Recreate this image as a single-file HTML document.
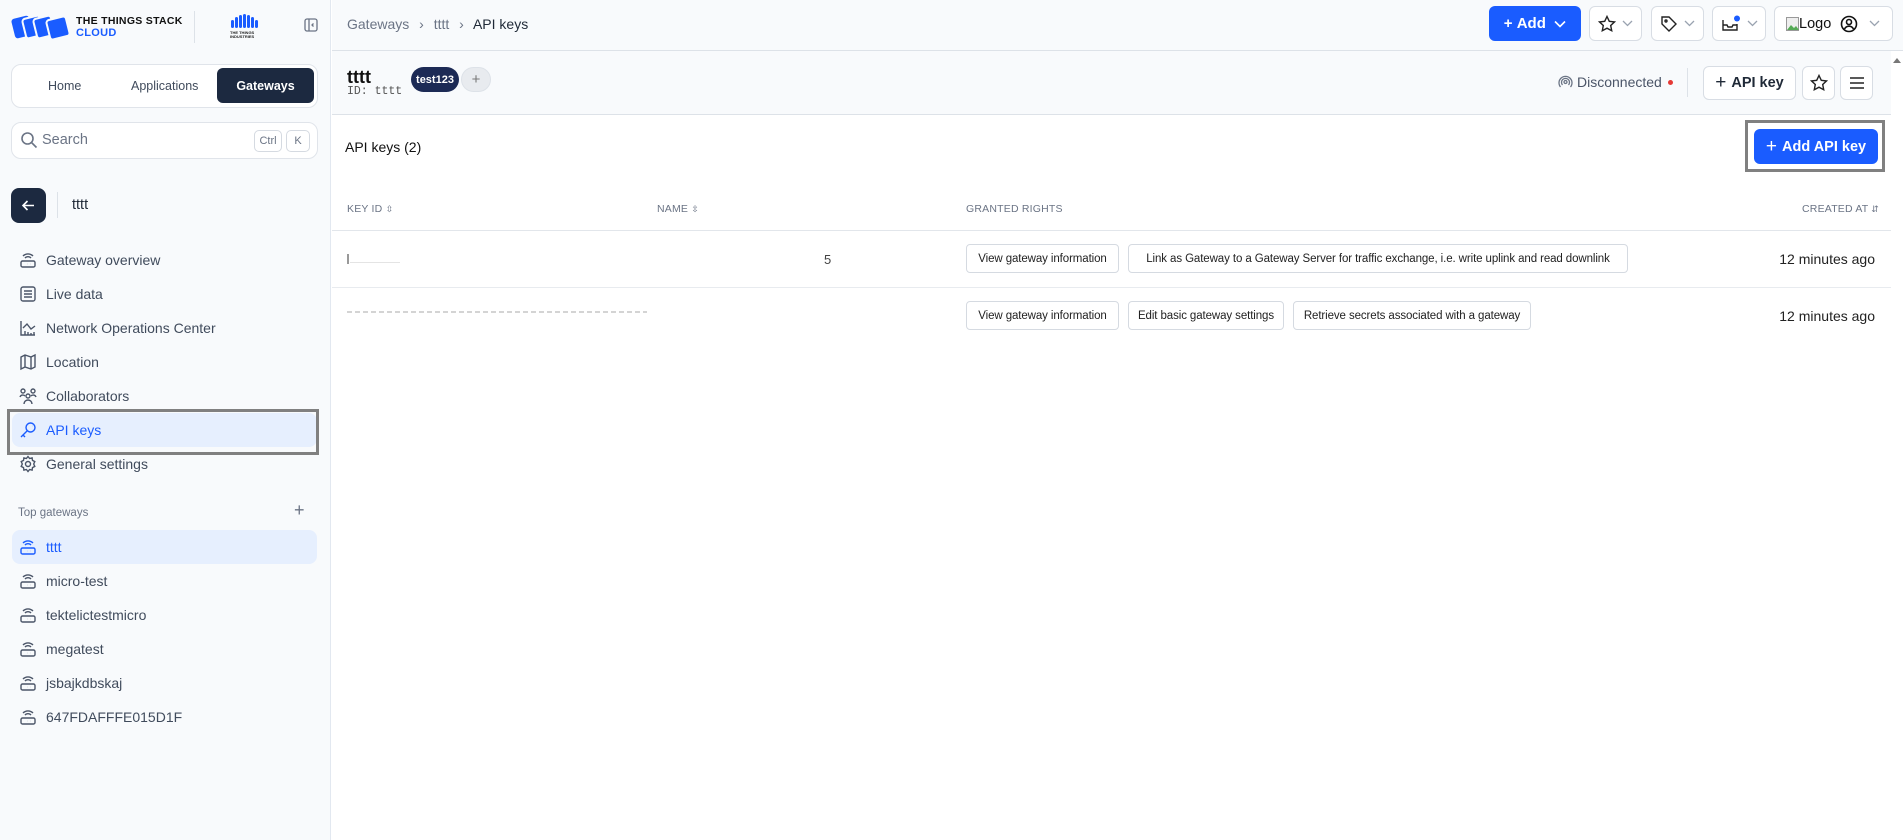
<!DOCTYPE html>
<html><head><meta charset="utf-8"><style>
*{box-sizing:border-box;margin:0;padding:0}
body{width:1903px;height:840px;overflow:hidden;background:#fff;font-family:"Liberation Sans",sans-serif;color:#1f2937;position:relative}
.a{position:absolute}
.side{left:0;top:0;width:331px;height:840px;background:#f8fafc;border-right:1px solid #e2e8f0}
.nav{left:19px;height:20px;display:flex;align-items:center;font-size:14px;color:#404b5c}
.nav svg{width:18px;height:18px;margin-right:9px;flex:none}
.chip{position:absolute;top:244px;height:29px;border:1px solid #d5dae1;border-radius:4px;background:#fff;font-size:11.5px;letter-spacing:-0.1px;color:#222;display:flex;align-items:center;justify-content:center;white-space:nowrap}
.btn{position:absolute;border:1px solid #d8dde4;border-radius:6px;background:#fff;display:flex;align-items:center;justify-content:center}
.th{position:absolute;top:203px;font-size:10.5px;color:#6b7485;letter-spacing:.2px}
</style></head><body>
<div class="a side"></div>
<!-- logo -->
<svg class="a" style="left:11px;top:13px" width="62" height="28" viewBox="0 0 62 28"><g fill="#1a5cff"><rect x="2" y="4" width="18" height="20" rx="3" transform="rotate(-14 11 14)"/><rect x="13" y="4" width="18" height="20" rx="3" transform="rotate(-14 22 14)" stroke="#f8fafc" stroke-width="2"/><rect x="24" y="4" width="18" height="20" rx="3" transform="rotate(-14 33 14)" stroke="#f8fafc" stroke-width="2"/><rect x="37" y="5" width="20" height="20" rx="3" transform="rotate(-14 47 15)" stroke="#f8fafc" stroke-width="2"/></g></svg>
<div class="a" style="left:76px;top:15px;font-size:10.5px;font-weight:bold;line-height:12px;color:#111;letter-spacing:.3px">THE THINGS STACK<br><span style="color:#1a5cff;font-size:11px">CLOUD</span></div>
<div class="a" style="left:194px;top:11px;width:1px;height:32px;background:#dde2e8"></div>
<svg class="a" style="left:230px;top:14px" width="28" height="14"><g fill="#1a5cff"><rect x="1" y="6" width="3" height="8" rx="1.5"/><rect x="5" y="3" width="3" height="11" rx="1.5"/><rect x="9" y="1" width="3" height="13" rx="1.5"/><rect x="13" y="0" width="3" height="14" rx="1.5"/><rect x="17" y="1" width="3" height="13" rx="1.5"/><rect x="21" y="3" width="3" height="11" rx="1.5"/><rect x="25" y="6" width="3" height="8" rx="1.5"/></g></svg>
<div class="a" style="left:230px;top:31px;font-size:4px;font-weight:bold;line-height:4px;color:#222">THE THINGS<br>INDUSTRIES</div>
<svg class="a" style="left:304px;top:18px" width="14" height="14" viewBox="0 0 14 14" fill="none" stroke="#6b7485" stroke-width="1.3"><rect x="1" y="1" width="12" height="12" rx="2"/><path d="M5 1v12M9.5 5.5L8 7l1.5 1.5"/></svg>
<!-- tabs -->
<div class="a" style="left:11px;top:64px;width:307px;height:44px;border:1px solid #e0e4ea;border-radius:10px;background:#fff"></div>
<div class="a" style="left:48px;top:79px;font-size:12.5px;color:#404b5c">Home</div>
<div class="a" style="left:131px;top:79px;font-size:12.5px;color:#404b5c">Applications</div>
<div class="a" style="left:217px;top:68px;width:97px;height:35px;border-radius:6px;background:#1c2940;color:#fff;font-size:12.5px;font-weight:bold;display:flex;align-items:center;justify-content:center">Gateways</div>
<!-- search -->
<div class="a" style="left:11px;top:122px;width:307px;height:37px;border:1px solid #e0e4ea;border-radius:10px;background:#fff"></div>
<svg class="a" style="left:20px;top:131px" width="18" height="18" viewBox="0 0 18 18" fill="none" stroke="#6b7485" stroke-width="1.6"><circle cx="7.5" cy="7.5" r="5.5"/><path d="M11.5 11.5l5 5"/></svg>
<div class="a" style="left:42px;top:132px;font-size:14.5px;color:#6b7485">Search</div>
<div class="a" style="left:254px;top:130px;width:28px;height:22px;border:1px solid #d5dae1;border-radius:5px;font-size:11px;color:#6b7485;display:flex;align-items:center;justify-content:center">Ctrl</div>
<div class="a" style="left:286px;top:130px;width:24px;height:22px;border:1px solid #d5dae1;border-radius:5px;font-size:11px;color:#6b7485;display:flex;align-items:center;justify-content:center">K</div>
<!-- back -->
<div class="a" style="left:11px;top:188px;width:35px;height:35px;border-radius:8px;background:#1c2940"></div>
<svg class="a" style="left:21px;top:198px" width="15" height="15" viewBox="0 0 15 15" fill="none" stroke="#fff" stroke-width="1.6"><path d="M13 7.5H2M6.5 3L2 7.5 6.5 12"/></svg>
<div class="a" style="left:57px;top:192px;width:1px;height:26px;background:#dde2e8"></div>
<div class="a" style="left:72px;top:197px;font-size:14.5px;color:#1f2937">tttt</div>
<!-- nav -->
<div class="a" style="left:12px;top:413px;width:305px;height:34px;background:#e6effe;border-radius:8px"></div>
<div class="a" style="left:7px;top:409px;width:312px;height:46px;border:3px solid #808080"></div>
<div class="a nav" style="top:250px"><svg viewBox="0 0 18 18" fill="none" stroke="#4b5568" stroke-width="1.4"><rect x="2" y="10" width="14" height="6" rx="1.5"/><path d="M6 7a4 4 0 016 0M4 5a7 7 0 0110 0M8 13h.1M11 13h.1"/></svg>Gateway overview</div>
<div class="a nav" style="top:284px"><svg viewBox="0 0 18 18" fill="none" stroke="#4b5568" stroke-width="1.4"><rect x="2" y="2" width="14" height="14" rx="2"/><path d="M5 6h8M5 9h8M5 12h8"/></svg>Live data</div>
<div class="a nav" style="top:318px"><svg viewBox="0 0 18 18" fill="none" stroke="#4b5568" stroke-width="1.4"><path d="M2 2v14h14M4 9l4-4 4 5 4-3M6 16v-4M9 16v-3M12 16v-2M15 16v-3"/></svg>Network Operations Center</div>
<div class="a nav" style="top:352px"><svg viewBox="0 0 18 18" fill="none" stroke="#4b5568" stroke-width="1.4"><path d="M2 4l4-2 6 2 4-2v12l-4 2-6-2-4 2zM6 2v12M12 4v12"/></svg>Location</div>
<div class="a nav" style="top:386px"><svg viewBox="0 0 18 18" fill="none" stroke="#4b5568" stroke-width="1.4"><circle cx="4" cy="4" r="2"/><circle cx="14" cy="4" r="2"/><circle cx="9" cy="9" r="2"/><path d="M1 10a3 3 0 015-1M17 10a3 3 0 00-5-1M5 17a4 4 0 018 0"/></svg>Collaborators</div>
<div class="a nav" style="top:420px;color:#1a5cff"><svg viewBox="0 0 18 18" fill="none" stroke="#1a5cff" stroke-width="1.4"><circle cx="11.5" cy="6.5" r="4.5"/><path d="M8.5 9.5L2 16M4 14l2 2M13 5h.1"/></svg>API keys</div>
<div class="a nav" style="top:454px"><svg viewBox="0 0 18 18" fill="none" stroke="#4b5568" stroke-width="1.4"><circle cx="9" cy="9" r="2.5"/><path d="M9 1.5l1.6 2 2.5-.6.4 2.5 2.3 1.2-1.1 2.4 1.1 2.4-2.3 1.2-.4 2.5-2.5-.6L9 16.5l-1.6-2-2.5.6-.4-2.5-2.3-1.2 1.1-2.4-1.1-2.4 2.3-1.2.4-2.5 2.5.6z"/></svg>General settings</div>
<div class="a" style="left:18px;top:507px;font-size:11.5px;color:#6b7485">Top gateways</div>
<div class="a" style="left:294px;top:500px;font-size:18px;color:#6b7485">+</div>
<div class="a" style="left:12px;top:530px;width:305px;height:34px;background:#e6effe;border-radius:8px"></div>
<div class="a nav" style="top:537px;color:#1a5cff"><svg viewBox="0 0 18 18" fill="none" stroke="#1a5cff" stroke-width="1.4"><rect x="2" y="10" width="14" height="6" rx="1.5"/><path d="M6 7a4 4 0 016 0M4 5a7 7 0 0110 0M8 13h.1M11 13h.1"/></svg>tttt</div>
<div class="a nav" style="top:571px"><svg viewBox="0 0 18 18" fill="none" stroke="#4b5568" stroke-width="1.4"><rect x="2" y="10" width="14" height="6" rx="1.5"/><path d="M6 7a4 4 0 016 0M4 5a7 7 0 0110 0M8 13h.1M11 13h.1"/></svg>micro-test</div>
<div class="a nav" style="top:605px"><svg viewBox="0 0 18 18" fill="none" stroke="#4b5568" stroke-width="1.4"><rect x="2" y="10" width="14" height="6" rx="1.5"/><path d="M6 7a4 4 0 016 0M4 5a7 7 0 0110 0M8 13h.1M11 13h.1"/></svg>tektelictestmicro</div>
<div class="a nav" style="top:639px"><svg viewBox="0 0 18 18" fill="none" stroke="#4b5568" stroke-width="1.4"><rect x="2" y="10" width="14" height="6" rx="1.5"/><path d="M6 7a4 4 0 016 0M4 5a7 7 0 0110 0M8 13h.1M11 13h.1"/></svg>megatest</div>
<div class="a nav" style="top:673px"><svg viewBox="0 0 18 18" fill="none" stroke="#4b5568" stroke-width="1.4"><rect x="2" y="10" width="14" height="6" rx="1.5"/><path d="M6 7a4 4 0 016 0M4 5a7 7 0 0110 0M8 13h.1M11 13h.1"/></svg>jsbajkdbskaj</div>
<div class="a nav" style="top:707px"><svg viewBox="0 0 18 18" fill="none" stroke="#4b5568" stroke-width="1.4"><rect x="2" y="10" width="14" height="6" rx="1.5"/><path d="M6 7a4 4 0 016 0M4 5a7 7 0 0110 0M8 13h.1M11 13h.1"/></svg>647FDAFFFE015D1F</div>

<!-- topbar -->
<div class="a" style="left:332px;top:0;width:1571px;height:114px;background:#f8fafc"></div>
<div class="a" style="left:332px;top:50px;width:1571px;height:1px;background:#dde2e8"></div>
<div class="a" style="left:332px;top:114px;width:1559px;height:1px;background:#dde2e8"></div>
<div class="a" style="left:347px;top:16px;font-size:14px;color:#6b7485">Gateways <span style="margin:0 6px">›</span> tttt <span style="margin:0 6px">›</span> <span style="color:#1f2937">API keys</span></div>
<div class="a" style="left:1489px;top:6px;width:92px;height:35px;border-radius:6px;background:#1a5cff;color:#fff;font-size:15px;font-weight:bold;display:flex;align-items:center;justify-content:center">+&nbsp;Add&nbsp;&nbsp;<svg width="12" height="8" viewBox="0 0 12 8" fill="none" stroke="#fff" stroke-width="1.6"><path d="M1 1.5l5 5 5-5"/></svg></div>
<div class="btn" style="left:1589px;top:6px;width:53px;height:35px"><svg width="18" height="18" viewBox="0 0 18 18" fill="none" stroke="#222" stroke-width="1.4"><path d="M9 1.5l2.3 4.8 5.2.6-3.8 3.6 1 5.2L9 13.2l-4.7 2.5 1-5.2L1.5 6.9l5.2-.6z"/></svg><svg style="margin-left:6px" width="11" height="7" fill="none" stroke="#9aa3b0" stroke-width="1.3"><path d="M1 1l4.5 4.5L10 1"/></svg></div>
<div class="btn" style="left:1651px;top:6px;width:53px;height:35px"><svg width="18" height="18" viewBox="0 0 18 18" fill="none" stroke="#222" stroke-width="1.4"><path d="M2 2h7l7 7-7 7-7-7z"/><circle cx="6" cy="6" r="1"/></svg><svg style="margin-left:6px" width="11" height="7" fill="none" stroke="#9aa3b0" stroke-width="1.3"><path d="M1 1l4.5 4.5L10 1"/></svg></div>
<div class="btn" style="left:1712px;top:6px;width:54px;height:35px"><svg width="20" height="18" viewBox="0 0 20 18" fill="none" stroke="#222" stroke-width="1.4"><path d="M2 5v10h14V9M2 10h4l1 2h4l1-2h4"/><circle cx="16" cy="3.5" r="3" fill="#1a5cff" stroke="none"/></svg><svg style="margin-left:6px" width="11" height="7" fill="none" stroke="#9aa3b0" stroke-width="1.3"><path d="M1 1l4.5 4.5L10 1"/></svg></div>
<div class="btn" style="left:1774px;top:6px;width:119px;height:35px;justify-content:flex-start;padding-left:11px"><svg width="13" height="14"><rect x="0.5" y="0.5" width="12" height="13" fill="#eee" stroke="#999"/><path d="M1 13l4-5 3 3 2-2 3 4z" fill="#5a5"/></svg><span style="font-size:14.5px;color:#111">Logo</span><svg style="margin-left:9px" width="18" height="18" viewBox="0 0 18 18" fill="none" stroke="#111" stroke-width="1.6"><circle cx="9" cy="9" r="7.5"/><circle cx="9" cy="7" r="2.5"/><path d="M4.5 14a5 5 0 019 0"/></svg><svg style="margin-left:11px" width="11" height="7" fill="none" stroke="#9aa3b0" stroke-width="1.3"><path d="M1 1l4.5 4.5L10 1"/></svg></div>
<!-- scrollbar -->
<div class="a" style="left:1891px;top:51px;width:12px;height:789px;background:#fff"></div>
<div class="a" style="left:1893px;top:58px;width:0;height:0;border-left:4px solid transparent;border-right:4px solid transparent;border-bottom:5px solid #777"></div>
<!-- gateway header -->
<div class="a" style="left:347px;top:67px;font-size:18px;font-weight:bold;color:#111">tttt</div>
<div class="a" style="left:347px;top:85px;font-size:11.5px;font-family:'Liberation Mono',monospace;color:#555">ID: tttt</div>
<div class="a" style="left:411px;top:67px;width:48px;height:25px;border-radius:13px;background:#1c2a55;color:#fff;font-size:11px;font-weight:bold;display:flex;align-items:center;justify-content:center">test123</div>
<div class="a" style="left:461px;top:67px;width:30px;height:25px;border-radius:13px;background:#e8ebef;border:1px solid #dde2e8;color:#777;font-size:15px;display:flex;align-items:center;justify-content:center">+</div>
<svg class="a" style="left:1558px;top:74px" width="15" height="15" viewBox="0 0 15 15" fill="none" stroke="#6b7485" stroke-width="1.3"><circle cx="7.5" cy="8" r="1.5"/><path d="M4.5 11a4 4 0 116 0M2.5 13a6.5 6.5 0 1110 0"/></svg>
<div class="a" style="left:1577px;top:74px;font-size:14px;color:#4b5568">Disconnected</div>
<div class="a" style="left:1668px;top:80px;width:5px;height:5px;border-radius:50%;background:#e53935"></div>
<div class="a" style="left:1687px;top:68px;width:1px;height:29px;background:#dde2e8"></div>
<div class="btn" style="left:1703px;top:66px;width:93px;height:34px;font-size:14.5px;font-weight:bold;color:#1f2937"><span style="font-size:19px;font-weight:normal;margin-right:5px">+</span>API key</div>
<div class="btn" style="left:1802px;top:66px;width:33px;height:34px"><svg width="18" height="18" viewBox="0 0 18 18" fill="none" stroke="#222" stroke-width="1.4"><path d="M9 1.5l2.3 4.8 5.2.6-3.8 3.6 1 5.2L9 13.2l-4.7 2.5 1-5.2L1.5 6.9l5.2-.6z"/></svg></div>
<div class="btn" style="left:1840px;top:66px;width:33px;height:34px"><svg width="16" height="14" fill="none" stroke="#222" stroke-width="1.5"><path d="M1 2h14M1 7h14M1 12h14"/></svg></div>
<!-- content -->
<div class="a" style="left:345px;top:139px;font-size:14px;color:#111">API keys (2)</div>
<div class="a" style="left:1745px;top:120px;width:140px;height:52px;border:3px solid #808080"></div>
<div class="a" style="left:1754px;top:129px;width:124px;height:35px;border-radius:6px;background:#1a5cff;color:#fff;font-size:14.5px;font-weight:bold;display:flex;align-items:center;justify-content:center"><span style="font-size:19px;font-weight:normal;margin-right:5px">+</span>Add API key</div>
<div class="th" style="left:347px">KEY ID <span style="font-size:9px">⇳</span></div>
<div class="th" style="left:657px">NAME <span style="font-size:9px">⇳</span></div>
<div class="th" style="left:966px">GRANTED RIGHTS</div>
<div class="th" style="left:1802px">CREATED AT <span style="font-size:9px">⇵</span></div>
<div class="a" style="left:332px;top:230px;width:1559px;height:1px;background:#e2e6eb"></div>
<div class="a" style="left:332px;top:287px;width:1559px;height:1px;background:#e8ebef"></div>
<div class="a" style="left:347px;top:254px;width:2px;height:10px;background:#999"></div>
<div class="a" style="left:350px;top:262px;width:50px;height:1px;background:#e4e4e4"></div>
<div class="a" style="left:824px;top:252px;font-size:13px;color:#444">5</div>
<div class="a" style="left:347px;top:311px;width:300px;height:2px;background:repeating-linear-gradient(90deg,#aaa 0 5px,transparent 5px 8px);opacity:.5"></div>
<div class="chip" style="left:966px;width:153px">View gateway information</div>
<div class="chip" style="left:1128px;width:500px">Link as Gateway to a Gateway Server for traffic exchange, i.e. write uplink and read downlink</div>
<div class="chip" style="left:966px;width:153px;top:301px">View gateway information</div>
<div class="chip" style="left:1128px;width:156px;top:301px">Edit basic gateway settings</div>
<div class="chip" style="left:1293px;width:238px;top:301px">Retrieve secrets associated with a gateway</div>
<div class="a" style="left:1770px;top:251px;width:105px;text-align:right;font-size:14px;color:#222">12 minutes ago</div>
<div class="a" style="left:1770px;top:308px;width:105px;text-align:right;font-size:14px;color:#222">12 minutes ago</div>
</body></html>
